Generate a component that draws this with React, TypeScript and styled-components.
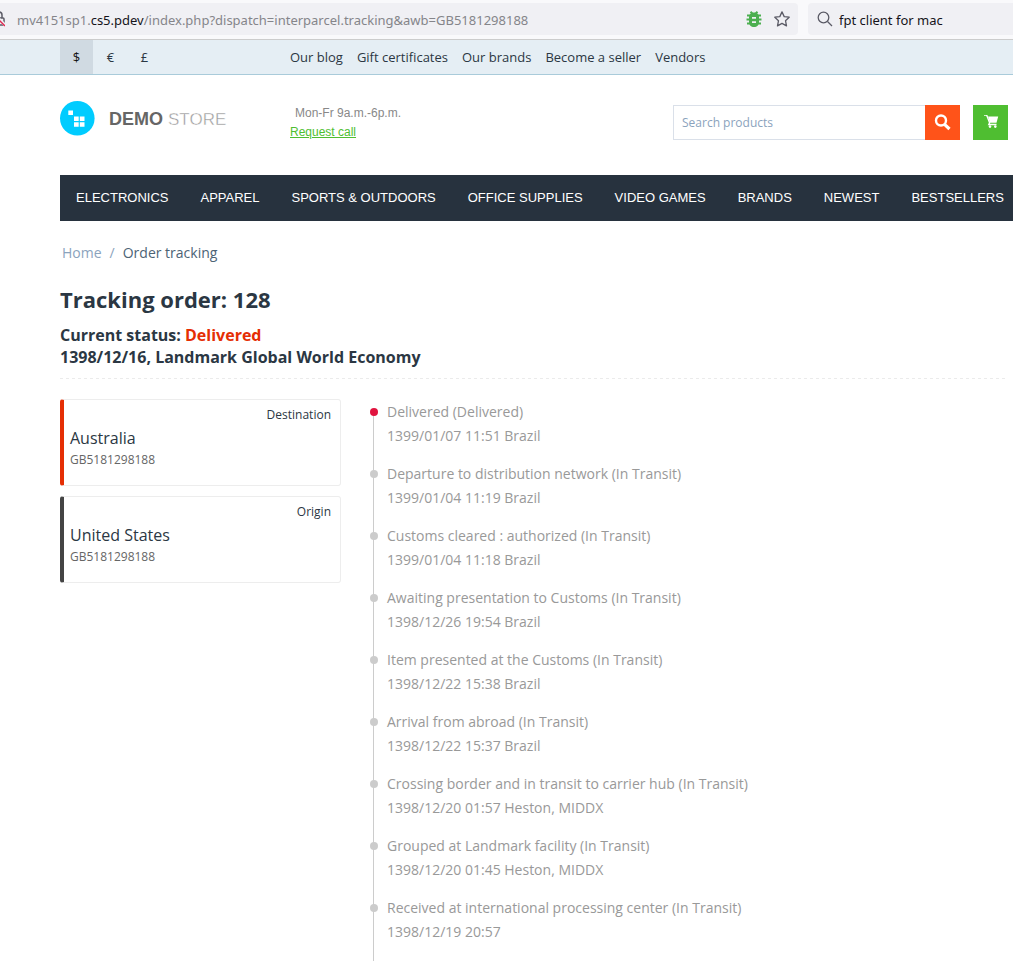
import React from 'react';
import styled, { createGlobalStyle } from 'styled-components';

const sans = '"Open Sans", "Noto Sans", sans-serif';
const arial = '"Liberation Sans", Arial, sans-serif';

const GlobalStyle = createGlobalStyle`
  * { box-sizing: border-box; }
  body { margin: 0; background: #fff; color: #2b3743; font-family: ${sans}; font-size: 14px; overflow-x: hidden; }
  a { text-decoration: none; color: inherit; }
  h1, h2, h3, p, ul, ol { margin: 0; padding: 0; }
  ul, ol { list-style: none; }
  button { border: 0; padding: 0; cursor: pointer; }
`;

const Page = styled.div`
  display: flex;
  flex-direction: column;
  min-height: 100vh;
  overflow: hidden;
`;

const BrowserBar = styled.div`
  display: flex;
  gap: 10px;
  height: 40px;
  padding: 3px 0 4px;
  background: #f9f9fb;
  border-bottom: 1px solid #ccc;
  font-family: "Noto Sans", sans-serif;
`;

const AddressBox = styled.div`
  flex: 1;
  min-width: 0;
  display: flex;
  align-items: center;
  gap: 12px;
  padding-right: 8px;
  background: #f0f0f4;
  border-radius: 0 4px 4px 0;
`;

const Address = styled.p`
  flex: 1;
  min-width: 0;
  overflow: hidden;
  white-space: nowrap;
  color: #85858a;
  font-size: 13px;
  line-height: 32px;
  padding-top: 1px;
  b { font-weight: 400; color: #15141a; }
`;

const ChromeButton = styled.button`
  display: flex;
  background: transparent;
`;

const BrowserSearch = styled.label`
  flex: 0 0 205px;
  min-width: 0;
  display: flex;
  align-items: center;
  gap: 6px;
  padding-left: 9px;
  background: #f0f0f4;
  border-radius: 4px 0 0 4px;
  input {
    flex: 1;
    min-width: 0;
    border: 0;
    padding: 1px 0 0;
    background: transparent;
    outline: 0;
    color: #15141a;
    font: 13px "Noto Sans", sans-serif;
  }
`;

const TopPanel = styled.div`
  display: flex;
  height: 35px;
  padding-left: 60px;
  background: #e5eef4;
  border-bottom: 1px solid #a9cbda;
  font-size: 13px;
  line-height: 34px;
`;

const Currencies = styled.div`
  display: flex;
  gap: 1px;
  width: 230px;
`;

const Currency = styled.button<{ $active?: boolean }>`
  width: 33px;
  background: ${(p) => (p.$active ? '#d0dae2' : 'transparent')};
  color: ${(p) => (p.$active ? '#111' : '#2b3743')};
  font: 13px ${sans};
`;

const QuickLinks = styled.nav`
  display: flex;
  gap: 14px;
  white-space: nowrap;
`;

const Header = styled.header`
  display: flex;
  align-items: flex-start;
  height: 100px;
  padding: 26px 5px 0 60px;
`;

const Logo = styled.a`
  display: flex;
  width: 230px;
`;

const Contact = styled.div`
  flex: 1;
  padding-top: 3px;
  font: 12px/19px ${arial};
  color: #888;
  p { padding-left: 5px; }
  a { color: #4fbe31; text-decoration: underline; }
`;

const Search = styled.form`
  display: flex;
  width: 287px;
  margin: 4px 13px 0 0;
  input {
    flex: 1;
    min-width: 0;
    height: 35px;
    padding: 0 8px;
    border: 1px solid #dae0e9;
    border-right: 0;
    border-radius: 0;
    outline: 0;
    font: 12px ${sans};
    color: #2b3743;
  }
  input::placeholder { color: #8ba3bd; opacity: 1; }
`;

const SquareButton = styled.button<{ $color: string }>`
  display: flex;
  align-items: center;
  justify-content: center;
  width: 35px;
  height: 35px;
  background: ${(p) => p.$color};
`;

const Cart = styled.div`
  padding-top: 4px;
`;

const Menu = styled.nav`
  display: flex;
  height: 46px;
  margin-left: 60px;
  background: #27323e;
  color: #fff;
  font: 13px/45px ${arial};
  white-space: nowrap;
  overflow: hidden;
  a { padding: 0 16px; }
  a:last-child { padding-right: 0; }
`;

const Content = styled.main`
  flex: 1;
  display: flex;
  flex-direction: column;
  padding: 0 5px 0 60px;
`;

const Breadcrumbs = styled.nav`
  display: flex;
  gap: 8px;
  padding: 22px 2px 0;
  line-height: 20px;
  color: #8ba3bd;
  span:last-child { color: #4c6375; }
`;

const Title = styled.h1`
  padding-top: 21px;
  font-size: 22px;
  line-height: 30px;
`;

const Status = styled.div`
  padding: 10px 0;
  font-size: 16px;
  font-weight: 700;
  line-height: 22px;
  em { font-style: normal; color: #e52e04; }
`;

const Divider = styled.div`
  height: 1px;
  background: repeating-linear-gradient(90deg, #ebebeb 0 3px, transparent 3px 6px);
`;

const Columns = styled.div`
  flex: 1;
  display: flex;
  gap: 29px;
  padding-top: 20px;
`;

const Places = styled.div`
  flex: 0 0 281px;
  display: flex;
  flex-direction: column;
  gap: 10px;
`;

const Place = styled.section<{ $accent: string }>`
  height: 87px;
  padding: 6px 9px 0 6px;
  border: 1px solid #ededed;
  border-left: 4px solid ${(p) => p.$accent};
  border-radius: 3px;
`;

const PlaceKind = styled.p`
  font-size: 12px;
  line-height: 18px;
  text-align: right;
`;

const PlaceName = styled.h2`
  padding: 2px 0 1px;
  font-size: 16px;
  font-weight: 400;
  line-height: 24px;
`;

const PlaceCode = styled.p`
  color: #666;
  font-size: 12px;
  line-height: 18px;
`;

const Timeline = styled.ol`
  flex: 1;
  display: flex;
  flex-direction: column;
  padding-top: 1px;
  color: #999;
  line-height: 24px;
`;

const Rail = styled.span<{ $first?: boolean }>`
  flex: 0 0 8px;
  background: linear-gradient(#ccc, #ccc) 3px ${(p) => (p.$first ? '12px' : '0')} / 1px 100% no-repeat;
  &::before {
    content: '';
    display: block;
    width: 8px;
    height: 8px;
    margin-top: 8px;
    border-radius: 50%;
    background: ${(p) => (p.$first ? '#e0143f' : '#ccc')};
  }
`;

const Event = styled.li`
  display: flex;
  gap: 9px;
  &:last-child { flex: 1; }
`;

const EventText = styled.div`
  padding-bottom: 14px;
`;

const events = [
  ['Delivered (Delivered)', '1399/01/07 11:51 Brazil'],
  ['Departure to distribution network (In Transit)', '1399/01/04 11:19 Brazil'],
  ['Customs cleared : authorized (In Transit)', '1399/01/04 11:18 Brazil'],
  ['Awaiting presentation to Customs (In Transit)', '1398/12/26 19:54 Brazil'],
  ['Item presented at the Customs (In Transit)', '1398/12/22 15:38 Brazil'],
  ['Arrival from abroad (In Transit)', '1398/12/22 15:37 Brazil'],
  ['Crossing border and in transit to carrier hub (In Transit)', '1398/12/20 01:57 Heston, MIDDX'],
  ['Grouped at Landmark facility (In Transit)', '1398/12/20 01:45 Heston, MIDDX'],
  ['Received at international processing center (In Transit)', '1398/12/19 20:57'],
];

const menuItems = ['ELECTRONICS', 'APPAREL', 'SPORTS & OUTDOORS', 'OFFICE SUPPLIES', 'VIDEO GAMES', 'BRANDS', 'NEWEST', 'BESTSELLERS'];
const quickLinks = ['Our blog', 'Gift certificates', 'Our brands', 'Become a seller', 'Vendors'];

const LockIcon = () => (
  <svg width="5" height="18" viewBox="0 0 5 18" fill="none">
    <path d="M-4 8h7q1 0 1 1v5q0 1-1 1h-7M2 8V5Q2 2-1 2" stroke="#5b5b66" strokeWidth="1.5" />
    <path d="M-2 8l7 7" stroke="#f0f0f4" strokeWidth="3" />
    <path d="M-2 9l7 7" stroke="#e22850" strokeWidth="1.4" />
  </svg>
);

const BugIcon = () => (
  <svg width="16" height="16" viewBox="0 0 16 16">
    <path d="M4.500.8l2 2M11.500.8l-2 2M1 4.500h14M.5 8.500h15M1 12.500h14" fill="none" stroke="#4caf50" strokeWidth="2" />
    <path d="M8 1.500c3 0 5 2 5 4.500v5c0 3-2 5-5 5s-5-2-5-5V6c0-2.500 2-4.500 5-4.500z" fill="#4caf50" />
    <path d="M6 6.900h4M6 11.100h4" stroke="#f0f0f4" strokeWidth="1.700" />
  </svg>
);

const StarIcon = () => (
  <svg width="16" height="16" viewBox="0 0 16 16" fill="none" stroke="#5b5b66" strokeWidth="1.300" strokeLinejoin="round">
    <path d="M8 .9l2.200 4.700 5 .6-3.700 3.500 1 5.200L8 12.400l-4.500 2.500 1-5.200L.8 6.200l5-.6z" />
  </svg>
);

const GlassIcon = () => (
  <svg width="16" height="16" viewBox="0 0 16 16" fill="none" stroke="#5b5b66" strokeWidth="1.300">
    <circle cx="6.500" cy="6.500" r="5.300" />
    <path d="M10.500 10.500l4.500 4.500" />
  </svg>
);

const SearchIcon = () => (
  <svg width="17" height="17" viewBox="0 0 17 17" fill="none" stroke="#fff">
    <circle cx="7" cy="6.500" r="5" strokeWidth="2.400" />
    <path d="M10.500 10.300l5 4.700" strokeWidth="3.200" />
  </svg>
);

const CartIcon = () => (
  <svg width="16" height="16" viewBox="0 2 16 16">
    <path d="M1 2h2.600l3 7.800-.8 1.700H13.500" fill="none" stroke="#fff" strokeWidth="1.400" />
    <path d="M5 3.500h10.200L13.500 9.800H7z" fill="#fff" />
    <circle cx="7" cy="13.600" r="1.300" fill="#fff" />
    <circle cx="12.300" cy="13.600" r="1.300" fill="#fff" />
  </svg>
);

const StoreLogo = () => (
  <svg width="170" height="35" viewBox="0 0 170 35" role="img" aria-label="Demo Store">
    <circle cx="17.300" cy="17.300" r="17.300" fill="#0cf" />
    <path d="M8.300 9.500H13V14H8.300zM14 15.500h4.700V20H14zM19.800 15.500h4.700V20h-4.700zM14 21.200h4.700v4.500H14zM19.800 21.200h4.700v4.500h-4.700z" fill="#fff" />
    <g fontFamily="Liberation Sans, Arial, sans-serif">
      <text x="49" y="24" fontSize="18" fontWeight="700" fill="#666">DEMO</text>
      <text x="108" y="24" fontSize="17" fill="#999" stroke="#fff" strokeWidth=".4">STORE</text>
    </g>
  </svg>
);

export default function App() {
  return (
    <Page>
      <GlobalStyle />
      <BrowserBar>
        <AddressBox>
          <LockIcon />
          <Address>mv4151sp1.<b>cs5.pdev</b>/index.php?dispatch=interparcel.tracking&amp;awb=GB5181298188</Address>
          <ChromeButton aria-label="Debug"><BugIcon /></ChromeButton>
          <ChromeButton aria-label="Bookmark this page"><StarIcon /></ChromeButton>
        </AddressBox>
        <BrowserSearch>
          <GlassIcon />
          <input aria-label="Web search" defaultValue="fpt client for mac" />
        </BrowserSearch>
      </BrowserBar>
      <TopPanel>
        <Currencies>
          <Currency $active>$</Currency>
          <Currency>€</Currency>
          <Currency>£</Currency>
        </Currencies>
        <QuickLinks>
          {quickLinks.map((l) => <a href="#" key={l}>{l}</a>)}
        </QuickLinks>
      </TopPanel>
      <Header>
        <Logo href="#"><StoreLogo /></Logo>
        <Contact>
          <p>Mon-Fr 9a.m.-6p.m.</p>
          <a href="#">Request call</a>
        </Contact>
        <Search onSubmit={(e) => e.preventDefault()}>
          <input type="text" aria-label="Search products" placeholder="Search products" />
          <SquareButton $color="#ff5319" aria-label="Search"><SearchIcon /></SquareButton>
        </Search>
        <Cart>
          <SquareButton $color="#4fbe31" aria-label="Cart"><CartIcon /></SquareButton>
        </Cart>
      </Header>
      <Menu>
        {menuItems.map((m) => <a href="#" key={m}>{m}</a>)}
      </Menu>
      <Content>
        <Breadcrumbs>
          <a href="#">Home</a>
          <span>/</span>
          <span>Order tracking</span>
        </Breadcrumbs>
        <Title>Tracking order: 128</Title>
        <Status>
          <p>Current status: <em>Delivered</em></p>
          <p>1398/12/16, Landmark Global World Economy</p>
        </Status>
        <Divider />
        <Columns>
          <Places>
            <Place $accent="#e52e04">
              <PlaceKind>Destination</PlaceKind>
              <PlaceName>Australia</PlaceName>
              <PlaceCode>GB5181298188</PlaceCode>
            </Place>
            <Place $accent="#444">
              <PlaceKind>Origin</PlaceKind>
              <PlaceName>United States</PlaceName>
              <PlaceCode>GB5181298188</PlaceCode>
            </Place>
          </Places>
          <Timeline>
            {events.map(([title, detail], i) => (
              <Event key={title}>
                <Rail $first={i === 0} />
                <EventText>
                  <p>{title}</p>
                  <p>{detail}</p>
                </EventText>
              </Event>
            ))}
          </Timeline>
        </Columns>
      </Content>
    </Page>
  );
}
